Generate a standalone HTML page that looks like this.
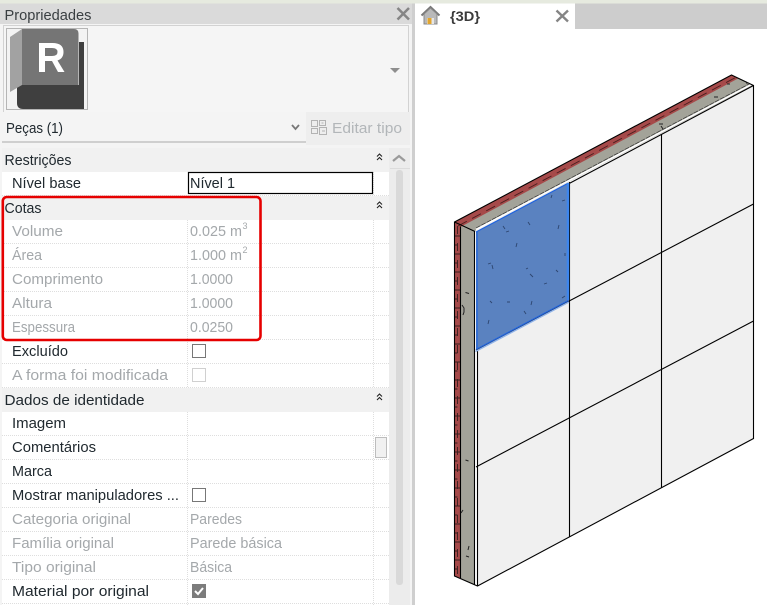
<!DOCTYPE html>
<html><head><meta charset="utf-8"><style>
html,body{margin:0;padding:0;background:#fff;width:767px;height:605px;overflow:hidden}
svg{display:block}
text{font-family:"Liberation Sans",sans-serif;font-size:15px;fill:#20292f}
.g{fill:#a4a8ab}
.s{font-size:9px}
</style></head><body>
<svg width="767" height="605" viewBox="0 0 767 605" xmlns="http://www.w3.org/2000/svg">
<rect width="767" height="605" fill="#fff"/>
<!-- top strip -->
<rect width="767" height="3.500" fill="#e6eadf"/>
<!-- left panel -->
<rect x="0" y="3.500" width="415" height="601.500" fill="#f4f4f4"/>
<rect x="0" y="3.500" width="412" height="20.500" fill="#dadada"/>
<text x="4.500" y="20" textLength="87" lengthAdjust="spacingAndGlyphs" style="fill:#3a3f42">Propriedades</text>
<path d="M397.500 8L409 19.500M409 8L397.500 19.500" stroke="#858585" stroke-width="2.500" fill="none"/>
<rect x="412" y="3.500" width="3" height="601.500" fill="#cfcfcf"/>
<!-- preview area -->
<rect x="3.500" y="25.500" width="405" height="90" fill="#f5f5f5" stroke="#d2d2d2"/>
<rect x="6.500" y="28.500" width="81" height="81" fill="#f3f3f3" stroke="#b5b5b5"/>
<!-- logo -->
<path d="M79 42h5v67H23q-6 0-6-6V85h62z" fill="#3f3f3f"/>
<path d="M22 29h52q4.500 0 4.500 4.500V85H22z" fill="#757575"/>
<path d="M10 37l12-8v56l-12 7z" fill="#a2a2a2"/>
<path d="M39 72V43h13.500q11 0 11 9 0 6.500-6 8.500l7 11.500h-6.500l-6-11h-7v11zM45 56h7q5.500 0 5.500-4T52 48h-7z" fill="#fff"/>
<path d="M390 68h10l-5 5z" fill="#8e8e8e"/>
<!-- combo -->
<rect x="2" y="112" width="304" height="29" fill="#f4f4f4"/>
<rect x="2" y="141" width="304" height="2" fill="#cfcfcf"/>
<text x="6" y="133" textLength="57" lengthAdjust="spacingAndGlyphs">Peças (1)</text>
<path d="M292 125l3.500 4 3.500-4" stroke="#777" stroke-width="1.800" fill="none"/>
<rect x="306" y="112" width="104" height="33" fill="#eeeeee"/>
<g fill="none" stroke="#b3b3b3" stroke-width="1">
<path d="M311.500 120.500h6v6h-6zM311.500 128.500h6v5h-6zM319.500 120.500h6v5h-6zM319.500 127.500h7v7h-7zM321.500 123h2M322 131h3"/>
</g>
<text x="332" y="133" textLength="70" lengthAdjust="spacingAndGlyphs" style="fill:#b2b6b9">Editar tipo</text>
<!-- grid background -->
<rect x="2" y="148" width="387" height="457" fill="#fff"/>
<rect x="2" y="148" width="387" height="24" fill="#f1f1f1"/>
<rect x="2" y="196" width="387" height="24" fill="#f1f1f1"/>
<rect x="2" y="388" width="387" height="24" fill="#f1f1f1"/>
<!-- grid lines -->
<g stroke="#dedede" stroke-dasharray="1 1" fill="none">
<path d="M2 195.500H389M2 243.500H389M2 267.500H389M2 291.500H389M2 315.500H389M2 339.500H389M2 363.500H389M2 387.500H389M2 435.500H389M2 459.500H389M2 483.500H389M2 507.500H389M2 531.500H389M2 555.500H389M2 579.500H389M2 603.500H389"/>
<path d="M187.500 220V388M373.500 220V388M187.500 412V605M373.500 412V605M373.500 172V196"/>
</g>
<!-- scrollbar -->
<rect x="389" y="148" width="21" height="457" fill="#ececec"/>
<path d="M393 161l6-5 6 5" stroke="#9a9a9a" stroke-width="2.200" fill="none"/>
<rect x="390" y="168" width="20" height="1" fill="#dcdcdc"/>
<rect x="396" y="170" width="7" height="415" rx="3" fill="#d9d9d9"/>
<rect x="375.500" y="437.500" width="11" height="20" fill="#f1f1f1" stroke="#bdbdbd"/>
<!-- collapse chevrons -->
<g fill="none" stroke="#222" stroke-width="1.100">
<path d="M377 156.500l2.500-2.500 2.500 2.500M377 160l2.500-2.500 2.500 2.500"/>
<path d="M377 204.500l2.500-2.500 2.500 2.500M377 208l2.500-2.500 2.500 2.500"/>
<path d="M377 396.500l2.500-2.500 2.500 2.500M377 400l2.500-2.500 2.500 2.500"/>
</g>
<!-- rows -->
<g style="--x:0">
<text x="4.500" y="165" textLength="67" lengthAdjust="spacingAndGlyphs">Restrições</text>
<text x="12" y="188" textLength="69" lengthAdjust="spacingAndGlyphs">Nível base</text>
<rect x="188.500" y="172.500" width="184" height="21" fill="#fff" stroke="#000" stroke-width="1.200"/>
<text x="190" y="188" textLength="45" lengthAdjust="spacingAndGlyphs">Nível 1</text>
<text x="4.500" y="213" textLength="37" lengthAdjust="spacingAndGlyphs">Cotas</text>
<text class="g" x="12" y="236" textLength="51" lengthAdjust="spacingAndGlyphs">Volume</text>
<text class="g" x="190" y="236" textLength="52" lengthAdjust="spacingAndGlyphs">0.025 m</text>
<text class="g s" x="242.500" y="229">3</text>
<text class="g" x="12" y="260" textLength="30" lengthAdjust="spacingAndGlyphs">Área</text>
<text class="g" x="190" y="260" textLength="52" lengthAdjust="spacingAndGlyphs">1.000 m</text>
<text class="g s" x="242.500" y="253">2</text>
<text class="g" x="12" y="284" textLength="91" lengthAdjust="spacingAndGlyphs">Comprimento</text>
<text class="g" x="190" y="284" textLength="43" lengthAdjust="spacingAndGlyphs">1.0000</text>
<text class="g" x="12" y="308" textLength="40" lengthAdjust="spacingAndGlyphs">Altura</text>
<text class="g" x="190" y="308" textLength="43" lengthAdjust="spacingAndGlyphs">1.0000</text>
<text class="g" x="12" y="332" textLength="63" lengthAdjust="spacingAndGlyphs">Espessura</text>
<text class="g" x="190" y="332" textLength="43" lengthAdjust="spacingAndGlyphs">0.0250</text>
<text x="12" y="356" textLength="56" lengthAdjust="spacingAndGlyphs">Excluído</text>
<rect x="192.500" y="344.500" width="13" height="13" fill="#fff" stroke="#777" stroke-width="1"/>
<text class="g" x="12" y="380" textLength="156" lengthAdjust="spacingAndGlyphs">A forma foi modificada</text>
<rect x="192.500" y="368.500" width="13" height="13" fill="#fff" stroke="#d0d0d0" stroke-width="1"/>
<text x="4.500" y="405" textLength="140" lengthAdjust="spacingAndGlyphs">Dados de identidade</text>
<text x="12" y="428" textLength="54" lengthAdjust="spacingAndGlyphs">Imagem</text>
<text x="12" y="452" textLength="84" lengthAdjust="spacingAndGlyphs">Comentários</text>
<text x="12" y="476" textLength="40" lengthAdjust="spacingAndGlyphs">Marca</text>
<text x="12" y="500" textLength="167" lengthAdjust="spacingAndGlyphs">Mostrar manipuladores ...</text>
<rect x="192.500" y="488.500" width="13" height="13" fill="#fff" stroke="#777" stroke-width="1"/>
<text class="g" x="12" y="524" textLength="119" lengthAdjust="spacingAndGlyphs">Categoria original</text>
<text class="g" x="190" y="524" textLength="52" lengthAdjust="spacingAndGlyphs">Paredes</text>
<text class="g" x="12" y="548" textLength="102" lengthAdjust="spacingAndGlyphs">Família original</text>
<text class="g" x="190" y="548" textLength="92" lengthAdjust="spacingAndGlyphs">Parede básica</text>
<text class="g" x="12" y="572" textLength="84" lengthAdjust="spacingAndGlyphs">Tipo original</text>
<text class="g" x="190" y="572" textLength="42" lengthAdjust="spacingAndGlyphs">Básica</text>
<text x="12" y="596" textLength="137" lengthAdjust="spacingAndGlyphs">Material por original</text>
</g>
<rect x="192" y="584" width="14" height="14" fill="#7c7c7c"/>
<path d="M195 591l3 3 5-6" stroke="#fff" stroke-width="2" fill="none"/>
<!-- red highlight -->
<rect x="2.800" y="197" width="257.700" height="143" rx="4" fill="none" stroke="#e60000" stroke-width="2.600"/>
<!-- tab bar -->
<rect x="575" y="3.500" width="192" height="25.500" fill="#cdcdcd"/>
<rect x="415" y="3.500" width="160" height="25.500" fill="#fff"/>
<path d="M421.500 15.500l9-8.500 9 8.500" fill="none" stroke="#777" stroke-width="2"/>
<path d="M424 14l6.500-6 6.500 6v10h-13z" fill="#b9b9b9" stroke="#888"/>
<rect x="427" y="18" width="7" height="6" fill="#e6e6e6"/>
<rect x="427.500" y="18" width="4" height="6" fill="#e2a52e"/>
<text x="450" y="21" textLength="30" lengthAdjust="spacingAndGlyphs" style="fill:#3b3b3b;font-weight:bold;font-size:14px">{3D}</text>
<path d="M556.500 10.500L568 21.500M568 10.500L556.500 21.500" stroke="#858585" stroke-width="2.400" fill="none"/>
<!-- 3D wall: faces -->
<path d="M474.500 231L753.500 85V438.500L477.500 586Z" fill="#f0f0f0"/>
<path d="M474.500 231L477.500 233V586L474.500 584.500Z" fill="#fff"/>
<!-- concrete -->
<path d="M460 226L738 78 753.500 85 474.500 231Z" fill="#a3a399"/>
<path d="M460 226L474.500 231V585L460 578Z" fill="#a3a399"/>
<path d="M476 229.500L751.500 84.500" stroke="#fff" stroke-width="1.600" fill="none"/>
<path d="M476 228L749 84" stroke="#333" stroke-width=".7" stroke-dasharray="5 1" fill="none"/>
<!-- brick -->
<path d="M454.500 222L731.500 75 738 78.500 460.500 227V578L454.500 576Z" fill="#a64a4a"/>
<g fill="none" stroke-width=".9">
<path d="M458 226L735.500 77.500" stroke-dasharray="10 6" stroke="#4a1f1f"/>
<path d="M457.500 226V577" stroke="#3b2020" stroke-dasharray="8 9"/>
<path d="M454.500 236h5.500M454.500 245h3M454.500 254h5.500M454.500 263h3M454.500 272h5.500M454.500 281h3M454.500 290h5.500M454.500 299h3M454.500 308h5.500M454.500 317h3M454.500 326h5.500M454.500 335h3M454.500 344h5.500M454.500 353h3M454.500 362h5.500M454.500 371h3M454.500 380h5.500M454.500 389h3M454.500 398h5.500M454.500 407h3M454.500 416h5.500M454.500 425h3M454.500 434h5.500M454.500 443h3M454.500 452h5.500M454.500 461h3M454.500 470h5.500M454.500 479h3M454.500 488h5.500M454.500 497h3M454.500 506h5.500M454.500 515h3M454.500 524h5.500M454.500 533h3M454.500 542h5.500M454.500 551h3M454.500 560h5.500M454.500 569h3" stroke="#3b2020"/>
</g>
<!-- outlines -->
<g fill="none" stroke="#000" stroke-width="1.100">
<path d="M454.500 222L731.500 75 753.500 85.500V438.500L477.500 586 454.500 576Z"/>
<path d="M460.500 226.500V578M454.500 222L475 231.500M477 232.500L753.500 85.500M474.500 231V584.500M477.500 233V586"/>
<path d="M569.500 182V537M661.500 134V488"/>
<path d="M476 350L753.500 204M476 467L753.500 321"/>
</g>
<!-- concrete flecks -->
<g stroke="#222" stroke-width="1" fill="none">
<path d="M465.500 292.500l3.500 1M462 305l2 3v4l-1 3M461 513l2-3M469 546l-1 4M466 556l3 1M465.500 460l3 1M714 97h4M659 124h4M661 126l2 3M727 84h3M746 83h3"/>
</g>
<!-- selected blue panel -->
<path d="M476 232L568.500 183V300.500L476 349.500Z" fill="#5a82c0"/>
<g fill="none" stroke="#1f63de" stroke-width="1.200">
<path d="M476 232L568.500 183"/>
<path d="M477 232V349"/>
<path d="M476 349.500L568.500 300.500"/>
</g>
<path d="M475.500 351.500L569 302" stroke="#8fb3ea" stroke-width="1.500" fill="none"/>
<path d="M568 183V300" stroke="#3d86ee" stroke-width="2.500" fill="none"/>
<g stroke="#2e466f" stroke-width=".9" fill="none">
<path d="M503 226l2 3M506 232l3-1M517 243l-1 4M528 222l2 3M552 195l-1 3M562 201l3-1M559 225l-1 4M488 264l3-1M492 265l1 4M526 269l2-1M530 274l3 3M544 284l3-1M556 270l2 2M565 253v3M490 301l2 2M507 302h3M531 305l1-4M565 296l-3 2M524 311l2 3M489 320l-1 4"/>
</g>
</svg>
</body></html>
